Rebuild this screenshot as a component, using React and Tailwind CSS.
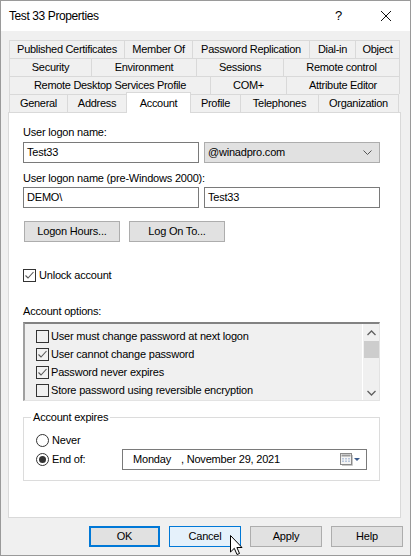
import React from "react";

const font = { fontFamily: '"Liberation Sans", Arial, sans-serif' };

function Check({ checked }) {
  return (
    <span className="w-[13px] h-[13px] border border-[#333333] flex items-center justify-center shrink-0">
      {checked && (
        <svg width="11" height="11" viewBox="0 0 11 11">
          <polyline points="1.5,5.5 4,8 9.5,2" fill="none" stroke="#555555" strokeWidth="1.1" />
        </svg>
      )}
    </span>
  );
}

function Radio({ on }) {
  return (
    <span className="w-[13px] h-[13px] rounded-full border border-[#333333] bg-white flex items-center justify-center shrink-0">
      {on && <span className="w-[7px] h-[7px] rounded-full bg-[#333333]" />}
    </span>
  );
}

function Tab({ label, className = "" }) {
  return (
    <div
      className={`h-[18px] border-t border-r border-[#d9d9d9] flex items-center justify-center tracking-[-0.3px] whitespace-nowrap ${className}`}
    >
      {label}
    </div>
  );
}

function Btn({ children, className = "" }) {
  return (
    <div
      className={`h-[21px] flex items-center justify-center border bg-[#e1e1e1] border-[#adadad] ${className}`}
    >
      {children}
    </div>
  );
}

export default function App() {
  const options = [
    ["User must change password at next logon", false],
    ["User cannot change password", true],
    ["Password never expires", true],
    ["Store password using reversible encryption", false],
  ];

  return (
    <div
      style={font}
      className="relative w-[411px] h-[556px] border border-[#9a9a9a] flex flex-col text-[11px] text-black tracking-[-0.2px] overflow-hidden"
    >
      {/* title bar */}
      <div className="h-[30px] bg-white flex items-center pl-[8px] shrink-0">
        <span className="text-[12px] tracking-[-0.4px] flex-1">Test 33 Properties</span>
        <span className="text-[13px] w-[12px] mr-[33px]">?</span>
        <svg width="12" height="12" viewBox="0 0 12 12" className="mr-[18px]">
          <path d="M1 1 L11 11 M11 1 L1 11" stroke="#111" strokeWidth="1" />
        </svg>
      </div>

      {/* body */}
      <div className="flex-1 bg-[#f0f0f0] pt-[9px] pl-[7px] flex flex-col">
        {/* tabs */}
        <div className="ml-[1px] w-[391px] flex flex-col">
          <div className="flex">
            <Tab label="Published Certificates" className="w-[116px] border-l" />
            <Tab label="Member Of" className="w-[68px]" />
            <Tab label="Password Replication" className="w-[117px]" />
            <Tab label="Dial-in" className="w-[46px]" />
            <Tab label="Object" className="w-[44px]" />
          </div>
          <div className="flex">
            <Tab label="Security" className="w-[83px] border-l" />
            <Tab label="Environment" className="w-[105px]" />
            <Tab label="Sessions" className="w-[87px]" />
            <Tab label="Remote control" className="w-[116px]" />
          </div>
          <div className="flex">
            <Tab label="Remote Desktop Services Profile" className="w-[202px] border-l" />
            <Tab label="COM+" className="w-[76px]" />
            <Tab label="Attribute Editor" className="w-[113px]" />
          </div>
          <div className="flex items-end h-[18px]">
            <Tab label="General" className="w-[59px] border-l" />
            <Tab label="Address" className="w-[59px]" />
            <div className="relative z-10 w-[65px] h-[21px] -mb-px bg-white border-t border-r border-l -ml-px border-[#d9d9d9] flex items-start justify-center pt-[2px] tracking-[-0.3px]">
              Account
            </div>
            <Tab label="Profile" className="w-[50px]" />
            <Tab label="Telephones" className="w-[78px]" />
            <Tab label="Organization" className="w-[80px]" />
          </div>
        </div>

        {/* panel */}
        <div className="w-[393px] h-[406px] bg-white border border-[#d9d9d9] pl-[14px] pt-[12px] flex flex-col">
          <div className="h-[14px] leading-[14px]">User logon name:</div>
          <div className="flex gap-[5px] mt-[3px]">
            <div className="w-[176px] h-[21px] border border-[#7a7a7a] bg-white flex items-center pl-[3px]">
              Test33
            </div>
            <div className="w-[176px] h-[21px] border border-[#adadad] bg-[#e1e1e1] flex items-center pl-[3px] pr-[7px]">
              <span className="flex-1">@winadpro.com</span>
              <svg width="9" height="6" viewBox="0 0 9 6">
                <polyline points="0.5,0.5 4.5,4.5 8.5,0.5" fill="none" stroke="#555" strokeWidth="1" />
              </svg>
            </div>
          </div>
          <div className="h-[14px] leading-[14px] mt-[8px]">User logon name (pre-Windows 2000):</div>
          <div className="flex gap-[5px] mt-[2px]">
            <div className="w-[176px] h-[21px] border border-[#7a7a7a] bg-white flex items-center pl-[3px]">
              DEMO\
            </div>
            <div className="w-[176px] h-[21px] border border-[#7a7a7a] bg-white flex items-center pl-[3px]">
              Test33
            </div>
          </div>
          <div className="flex gap-[9px] mt-[13px] ml-[1px]">
            <Btn className="w-[96px]">Logon Hours...</Btn>
            <Btn className="w-[96px]">Log On To...</Btn>
          </div>
          <div className="flex items-center h-[13px] mt-[27px] gap-[3px]">
            <Check checked />
            <span>Unlock account</span>
          </div>
          <div className="h-[14px] leading-[14px] mt-[22px]">Account options:</div>
          <div className="mt-[4px] w-[357px] h-[79px] bg-[#f0f0f0] border-t-2 border-l-2 border-t-[#828282] border-l-[#a0a0a0] border-r border-b border-r-[#e3e3e3] border-b-[#e3e3e3] flex">
            <div className="flex-1 pt-[3px] pl-[11px] flex flex-col">
              {options.map(([t, c]) => (
                <div key={t} className="h-[18px] flex items-center gap-[2px]">
                  <Check checked={c} />
                  <span>{t}</span>
                </div>
              ))}
            </div>
            <div className="w-[17px] border-l border-white flex flex-col items-center">
              <svg width="9" height="6" viewBox="0 0 9 6" className="mt-[6px]">
                <polyline points="0.5,5 4.5,1 8.5,5" fill="none" stroke="#606060" strokeWidth="1.3" />
              </svg>
              <div className="w-[15px] h-[17px] bg-[#cdcdcd] mt-[5px]" />
              <svg width="9" height="6" viewBox="0 0 9 6" className="mt-auto mb-[4px]">
                <polyline points="0.5,1 4.5,5 8.5,1" fill="none" stroke="#606060" strokeWidth="1.3" />
              </svg>
            </div>
          </div>

          {/* group box */}
          <div className="relative mt-[16px] w-[357px] h-[64px] border border-[#dcdcdc]">
            <span className="absolute -top-[8px] left-[7px] bg-white px-[2px] leading-[14px]">Account expires</span>
            <div className="flex items-center h-[13px] mt-[16px] ml-[12px] gap-[3px]">
              <Radio />
              <span>Never</span>
            </div>
            <div className="flex items-center mt-[2px] ml-[12px]">
              <div className="flex items-center gap-[3px] w-[86px]">
                <Radio on />
                <span>End of:</span>
              </div>
              <div className="w-[245px] h-[21px] border border-[#7a7a7a] bg-white flex items-center pl-[10px] pr-[5px]">
                <span className="w-[48px]">Monday</span>
                <span className="flex-1">, November 29, 2021</span>
                <svg width="21" height="13" viewBox="0 0 21 13">
                  <rect x="0.5" y="0.5" width="11" height="11" fill="#f4f4f4" stroke="#8a8a8a" />
                  <rect x="1.5" y="1.5" width="9" height="2" fill="#9a9a9a" />
                  <g fill="#b8c6dc">
                    <rect x="2" y="5" width="2" height="1.5" />
                    <rect x="5" y="5" width="2" height="1.5" />
                    <rect x="8" y="5" width="2" height="1.5" />
                    <rect x="2" y="7.5" width="2" height="1.5" />
                    <rect x="5" y="7.5" width="2" height="1.5" />
                    <rect x="8" y="7.5" width="2" height="1.5" />
                  </g>
                  <path d="M2 12.5 H12.5 V2" stroke="#c8c8c8" fill="none" />
                  <polygon points="14,5 20,5 17,8" fill="#3b5b8c" />
                </svg>
              </div>
            </div>
          </div>
        </div>

        {/* bottom buttons */}
        <div className="flex gap-[9px] mt-[8px] ml-[81px]">
          <div className="w-[71px] h-[21px] border-2 border-[#0078d7] bg-[#e1e1e1] flex items-center justify-center">
            OK
          </div>
          <div className="w-[72px] h-[21px] border border-[#0078d7] bg-[#e5f1fb] flex items-center justify-center">
            Cancel
          </div>
          <Btn className="w-[72px]">Apply</Btn>
          <Btn className="w-[72px]">Help</Btn>
        </div>
      </div>

      {/* mouse pointer */}
      <svg width="13" height="21" viewBox="0 0 13 21" className="absolute left-[229px] top-[534px]">
        <path d="M0.5 0.5 V17 L4.3 13.3 L7 19.5 L9.5 18.5 L6.9 12.5 L12 12.5 Z" fill="#fff" stroke="#000" strokeWidth="1" />
      </svg>
    </div>
  );
}
